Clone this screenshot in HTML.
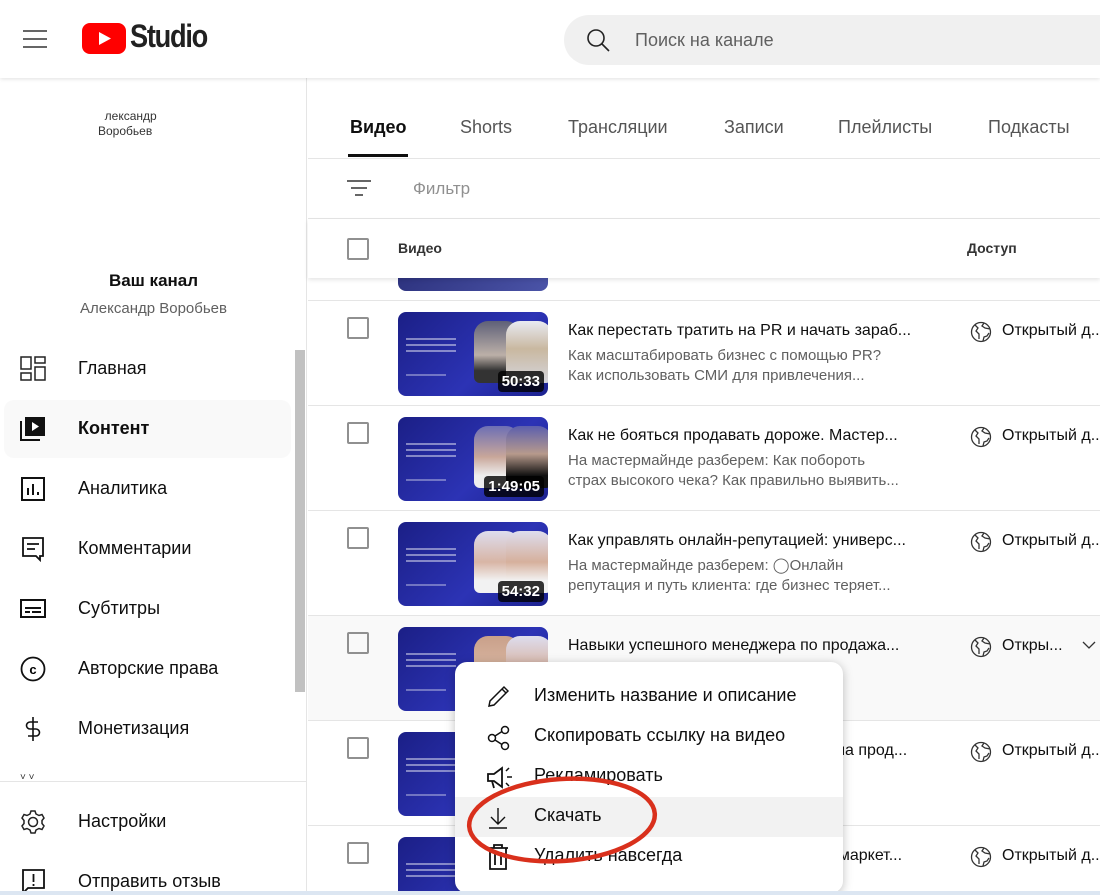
<!DOCTYPE html>
<html style="overflow:hidden;width:1100px;height:895px"><head><meta charset="utf-8">
<style>
*{box-sizing:border-box;margin:0;padding:0}
body{width:1100px;height:895px;overflow:hidden;background:#fff;font-family:"Liberation Sans",Roboto,Arial,sans-serif;color:#0f0f0f;position:relative}
#w{position:absolute;left:0;top:0;width:1100px;height:895px;overflow:hidden}
.a{position:absolute}
.hdr{left:0;top:0;width:1100px;height:78px;background:#fff;box-shadow:0 1px 4px rgba(0,0,0,.12);z-index:5}
.side{left:0;top:78px;width:307px;height:817px;border-right:1px solid #e5e5e5}
.nav{position:absolute;left:78px;font-size:18px;color:#0f0f0f}
.ico{position:absolute;left:20px}
.tab{position:absolute;top:117px;font-size:18px;color:#555}
.row{position:absolute;left:308px;width:792px;height:105px;border-top:1px solid #e5e5e5}
.cb{position:absolute;left:39px;top:16px;width:22px;height:22px;border:2px solid #909090;border-radius:2px}
.th{position:absolute;left:90px;top:11px;width:150px;height:84px;border-radius:8px;background:linear-gradient(135deg,#1b1f86,#2c33b5 60%,#1c2290);overflow:hidden}
.p1,.p2{position:absolute;top:9px;width:46px;height:62px;border-radius:14px 14px 6px 6px}
.p1{left:76px;background:linear-gradient(#5e6078,#bcb0a8 55%,#333 80%)}
.p2{left:108px;background:linear-gradient(#e8eaf2,#c9b8a0 45%,#d5d5dc)}
.dur{position:absolute;right:4px;bottom:4px;background:rgba(0,0,0,.8);color:#fff;font-weight:bold;font-size:15px;padding:2px 4px;border-radius:4px}
.tl{position:absolute;left:8px;top:26px;width:50px;height:2px;background:rgba(255,255,255,.45);box-shadow:0 6px 0 rgba(255,255,255,.45),0 12px 0 rgba(255,255,255,.45)}
.tl2{position:absolute;left:8px;top:62px;width:40px;height:2px;background:rgba(255,255,255,.35)}
.t{position:absolute;left:260px;top:21px;font-size:16px;color:#0f0f0f;white-space:nowrap}
.d{position:absolute;left:260px;top:45px;font-size:15px;color:#606060;line-height:20px;white-space:nowrap}
.acc{position:absolute;left:662px;top:19px;font-size:16px;color:#0f0f0f;white-space:nowrap}
.acc svg{position:absolute;left:0;top:1px}
.acc span{position:absolute;left:32px;top:2px}
.menu{left:455px;top:662px;width:388px;height:231px;background:#fff;border-radius:12px;box-shadow:0 2px 10px rgba(0,0,0,.25);z-index:10}
.mi{position:absolute;left:79px;font-size:18px;color:#0f0f0f;white-space:nowrap}
.mic{position:absolute;left:32px}
</style></head><body><div id="w">
<div class="a hdr">
 <svg class="a" style="left:23px;top:29px" width="24" height="20"><path d="M0 2h24M0 10h24M0 18h24" stroke="#333" stroke-width="1.6"/></svg>
 <svg class="a" style="left:82px;top:23px" width="44" height="31"><rect width="44" height="31" rx="8" fill="#f00"/><path d="M17 9l12 6.5-12 6.5z" fill="#fff"/></svg>
 <div class="a" style="left:130px;top:18px;font-size:32px;font-weight:bold;letter-spacing:-1.5px;color:#212121;transform:scaleX(.85);transform-origin:left">Studio</div>
 <div class="a" style="left:564px;top:15px;width:560px;height:50px;border-radius:25px;background:#f0f0f0"></div>
 <svg class="a" style="left:586px;top:28px" width="26" height="26"><circle cx="10" cy="10" r="8" fill="none" stroke="#222" stroke-width="1.6"/><path d="M16 16l7 7" stroke="#222" stroke-width="1.6"/></svg>
 <div class="a" style="left:635px;top:30px;font-size:18px;color:#606060">Поиск на канале</div>
</div>

<div class="a side">
 <div class="a" style="left:98px;top:31px;font-size:12px;color:#333;line-height:15px">&nbsp;&nbsp;лександр<br>Воробьев</div>
 <div class="a" style="left:0;width:307px;top:193px;text-align:center;font-size:17px;font-weight:bold">Ваш канал</div>
 <div class="a" style="left:0;width:307px;top:222px;text-align:center;font-size:15px;color:#606060">Александр Воробьев</div>
 <div class="a" style="left:295px;top:272px;width:10px;height:342px;background:#c1c1c1"></div>
 <div class="a" style="left:4px;top:322px;width:287px;height:58px;border-radius:10px;background:#f9f9f9"></div>
</div>
<div class="nav" style="top:358px">Главная</div>
<svg class="ico" style="top:356px" width="26" height="26" fill="none" stroke="#222" stroke-width="1.5"><rect x="1" y="1" width="10" height="12"/><rect x="15" y="1" width="10" height="6"/><rect x="1" y="17" width="10" height="7"/><rect x="15" y="11" width="10" height="13"/></svg>
<div class="nav" style="top:418px;font-weight:bold">Контент</div>
<svg class="ico" style="top:416px" width="26" height="26"><path d="M1 5v19h19" fill="none" stroke="#111" stroke-width="2"/><rect x="5" y="1" width="20" height="19" fill="#111"/><path d="M12 6l7 4.5-7 4.5z" fill="#fff"/></svg>
<div class="nav" style="top:478px">Аналитика</div>
<svg class="ico" style="top:476px" width="26" height="26" fill="none" stroke="#111" stroke-width="2"><rect x="2" y="2" width="22" height="22"/><path d="M8 19v-7M13 19V8M18 19v-3"/></svg>
<div class="nav" style="top:538px">Комментарии</div>
<svg class="ico" style="top:536px" width="26" height="26" fill="none" stroke="#111" stroke-width="1.8"><path d="M3 2h20v18h-3v4l-4-4H3z"/><path d="M7 8h12M7 13h8"/></svg>
<div class="nav" style="top:598px">Субтитры</div>
<svg class="ico" style="top:598px" width="26" height="22" fill="none" stroke="#111" stroke-width="2"><rect x="1" y="2" width="24" height="17"/><path d="M5 10h16M5 14h5M12 14h9"/></svg>
<div class="nav" style="top:658px">Авторские права</div>
<svg class="ico" style="top:656px" width="26" height="26"><circle cx="13" cy="13" r="11.5" fill="none" stroke="#111" stroke-width="1.8"/><text x="13" y="18" text-anchor="middle" font-size="13" font-weight="bold" font-family="Liberation Sans">c</text></svg>
<div class="nav" style="top:718px">Монетизация</div>
<svg class="ico" style="top:715px" width="26" height="28" fill="none" stroke="#111" stroke-width="1.6"><path d="M13 2v24M18 7h-8a3 3 0 000 7h6a3 3 0 010 7H8"/></svg>
<div class="a" style="left:20px;top:772px;font-size:10px;color:#333">˅ ˅</div>
<div class="a" style="left:0;top:781px;width:307px;height:1px;background:#e5e5e5"></div>
<div class="nav" style="top:811px">Настройки</div>
<svg class="ico" style="top:809px" width="26" height="26" fill="none" stroke="#222" stroke-width="1.5"><circle cx="13" cy="13" r="4.5"/><path d="M11 2h4l1 3 3 1.5 3-1 2 3.5-2 2.5v3l2 2.5-2 3.5-3-1-3 1.5-1 3h-4l-1-3-3-1.5-3 1-2-3.5 2-2.5v-3l-2-2.5 2-3.5 3 1 3-1.5z"/></svg>
<div class="nav" style="top:871px">Отправить отзыв</div>
<svg class="ico" style="top:868px" width="26" height="27" fill="none" stroke="#111" stroke-width="1.8"><path d="M3 2h21v18H8l-5 5z"/><path d="M13.5 6v8M13.5 16v2"/></svg>

<div class="tab" style="left:350px;color:#0f0f0f;font-weight:bold">Видео</div>
<div class="a" style="left:348px;top:154px;width:60px;height:3px;background:#0f0f0f"></div>
<div class="tab" style="left:460px">Shorts</div>
<div class="tab" style="left:568px">Трансляции</div>
<div class="tab" style="left:724px">Записи</div>
<div class="tab" style="left:838px">Плейлисты</div>
<div class="tab" style="left:988px">Подкасты</div>
<div class="a" style="left:308px;top:158px;width:792px;height:1px;background:#e5e5e5"></div>
<svg class="a" style="left:347px;top:179px" width="24" height="18" stroke="#333" stroke-width="1.6"><path d="M0 2h24M4 9h16M8 16h8"/></svg>
<div class="a" style="left:413px;top:179px;font-size:17px;color:#909090">Фильтр</div>
<div class="a" style="left:308px;top:218px;width:792px;height:1px;background:#e5e5e5"></div>
<div class="a" style="left:308px;top:219px;width:792px;height:59px;background:#fff;box-shadow:0 2px 4px rgba(0,0,0,.1);z-index:3">
 <div class="cb" style="top:19px"></div>
 <div class="a" style="left:90px;top:21px;font-size:14px;font-weight:bold;color:#333">Видео</div>
 <div class="a" style="left:659px;top:21px;font-size:14px;font-weight:bold;color:#333">Доступ</div>
</div>
<div class="a" style="left:398px;top:260px;width:150px;height:31px;border-radius:8px;background:linear-gradient(135deg,#2a2f7a,#4b54a8)"></div>

<div class="row" style="top:300px"><div class="cb"></div><div class="th"><div class="tl"></div><div class="tl2"></div><div class="p1"></div><div class="p2"></div><div class="dur">50:33</div></div>
<div class="t">Как перестать тратить на PR и начать зараб...</div><div class="d">Как масштабировать бизнес с помощью PR?<br>Как использовать СМИ для привлечения...</div>
<div class="acc"><svg width="22" height="22" fill="none" stroke="#333" stroke-width="1.3"><circle cx="11" cy="11" r="9.5"/><path d="M5 4l3 3-2 3 3 3v5M14 2l-2 3 3 2 5 1M13 20l1-4 3-1 2-3"/></svg><span>Открытый д...</span></div></div>

<div class="row" style="top:405px"><div class="cb"></div><div class="th"><div class="tl"></div><div class="tl2"></div><div class="p1" style="background:linear-gradient(#6d6fb5,#c9a79a 50%,#eee 80%)"></div><div class="p2" style="background:linear-gradient(#5c5fae,#b79a8c 45%,#111 80%)"></div><div class="dur">1:49:05</div></div>
<div class="t">Как не бояться продавать дороже. Мастер...</div><div class="d">На мастермайнде разберем: Как побороть<br>страх высокого чека? Как правильно выявить...</div>
<div class="acc"><svg width="22" height="22" fill="none" stroke="#333" stroke-width="1.3"><circle cx="11" cy="11" r="9.5"/><path d="M5 4l3 3-2 3 3 3v5M14 2l-2 3 3 2 5 1M13 20l1-4 3-1 2-3"/></svg><span>Открытый д...</span></div></div>

<div class="row" style="top:510px"><div class="cb"></div><div class="th"><div class="tl"></div><div class="tl2"></div><div class="p1" style="background:linear-gradient(#dde,#d8b5a5 50%,#f2f2f2 80%)"></div><div class="p2" style="background:linear-gradient(#dde,#d6b09c 50%,#f2f2f2 80%)"></div><div class="dur">54:32</div></div>
<div class="t">Как управлять онлайн-репутацией: универс...</div><div class="d">На мастермайнде разберем: ◯Онлайн<br>репутация и путь клиента: где бизнес теряет...</div>
<div class="acc"><svg width="22" height="22" fill="none" stroke="#333" stroke-width="1.3"><circle cx="11" cy="11" r="9.5"/><path d="M5 4l3 3-2 3 3 3v5M14 2l-2 3 3 2 5 1M13 20l1-4 3-1 2-3"/></svg><span>Открытый д...</span></div></div>

<div class="row" style="top:615px;background:#f9f9f9"><div class="cb"></div><div class="th"><div class="tl"></div><div class="tl2"></div><div class="p1" style="background:linear-gradient(#c9a08a,#d8b5a0 50%,#333 80%)"></div><div class="p2" style="background:linear-gradient(#dde,#d8b5a5 50%,#eee 80%)"></div></div>
<div class="t">Навыки успешного менеджера по продажа...</div>
<div class="acc"><svg width="22" height="22" fill="none" stroke="#333" stroke-width="1.3"><circle cx="11" cy="11" r="9.5"/><path d="M5 4l3 3-2 3 3 3v5M14 2l-2 3 3 2 5 1M13 20l1-4 3-1 2-3"/></svg><span>Откры...</span><svg style="left:112px;top:6px" width="14" height="9" fill="none" stroke="#333" stroke-width="1.3"><path d="M1 1l6 6 6-6"/></svg></div></div>

<div class="row" style="top:720px"><div class="cb"></div><div class="th"><div class="tl"></div><div class="tl2"></div><div class="p1"></div><div class="p2"></div></div>
<div class="t">Топ 10 ошибок при построении отдела прод...</div><div class="d">Не понимаешь, почему нет чёткие<br>продажи? Ответим на вопросы,...</div>
<div class="acc"><svg width="22" height="22" fill="none" stroke="#333" stroke-width="1.3"><circle cx="11" cy="11" r="9.5"/><path d="M5 4l3 3-2 3 3 3v5M14 2l-2 3 3 2 5 1M13 20l1-4 3-1 2-3"/></svg><span>Открытый д...</span></div></div>

<div class="row" style="top:825px;height:70px;overflow:hidden"><div class="cb"></div><div class="th"><div class="tl"></div><div class="tl2"></div><div class="p1"></div><div class="p2"></div></div>
<div class="t">Как продать долгосрочную работу в маркет...</div><div class="d">Разберем, как быстро и быстро</div>
<div class="acc"><svg width="22" height="22" fill="none" stroke="#333" stroke-width="1.3"><circle cx="11" cy="11" r="9.5"/><path d="M5 4l3 3-2 3 3 3v5M14 2l-2 3 3 2 5 1M13 20l1-4 3-1 2-3"/></svg><span>Открытый д...</span></div></div>

<div class="a menu">
 <div class="a" style="left:0;top:135px;width:388px;height:40px;background:#f2f2f2"></div>
 <svg class="mic" style="top:22px" width="24" height="24" fill="none" stroke="#111" stroke-width="1.5"><path d="M2 22l1-5L17 3l4 4L7 21z M15 5l4 4"/></svg>
 <div class="mi" style="top:23px">Изменить название и описание</div>
 <svg class="mic" style="top:63px" width="24" height="26" fill="none" stroke="#111" stroke-width="1.5"><circle cx="18" cy="5" r="3.5"/><circle cx="5" cy="13" r="3.5"/><circle cx="18" cy="21" r="3.5"/><path d="M8 11l7-4.5M8 15l7 4.5"/></svg>
 <div class="mi" style="top:63px">Скопировать ссылку на видео</div>
 <svg class="mic" style="top:103px" width="26" height="26" fill="none" stroke="#111" stroke-width="1.8"><path d="M1 9h6l8-6v19l-8-6H1zM5 16l2 7"/><path d="M19 6l3-3M20 12h5M19 18l3 3" stroke-width="1.5"/></svg>
 <div class="mi" style="top:103px">Рекламировать</div>
 <svg class="mic" style="top:144px" width="22" height="24" fill="none" stroke="#111" stroke-width="1.4"><path d="M11 2v16M4 11l7 7 7-7M2 22h18"/></svg>
 <div class="mi" style="top:143px">Скачать</div>
 <svg class="mic" style="top:182px" width="22" height="26" fill="none" stroke="#111" stroke-width="1.8"><path d="M1 4h20M7 4V1h8v3M3 4v21h16V4M8 8v13M14 8v13"/></svg>
 <div class="mi" style="top:183px">Удалить навсегда</div>
</div>
<svg class="a" style="left:462px;top:773px;z-index:11" width="200" height="98"><ellipse cx="100" cy="47" rx="93" ry="41" fill="none" stroke="#d9301c" stroke-width="4.5" transform="rotate(-4 100 47)"/></svg>
<div class="a" style="left:0;top:891px;width:1100px;height:4px;background:#dce6f2;z-index:12"></div>
</div></body></html>
